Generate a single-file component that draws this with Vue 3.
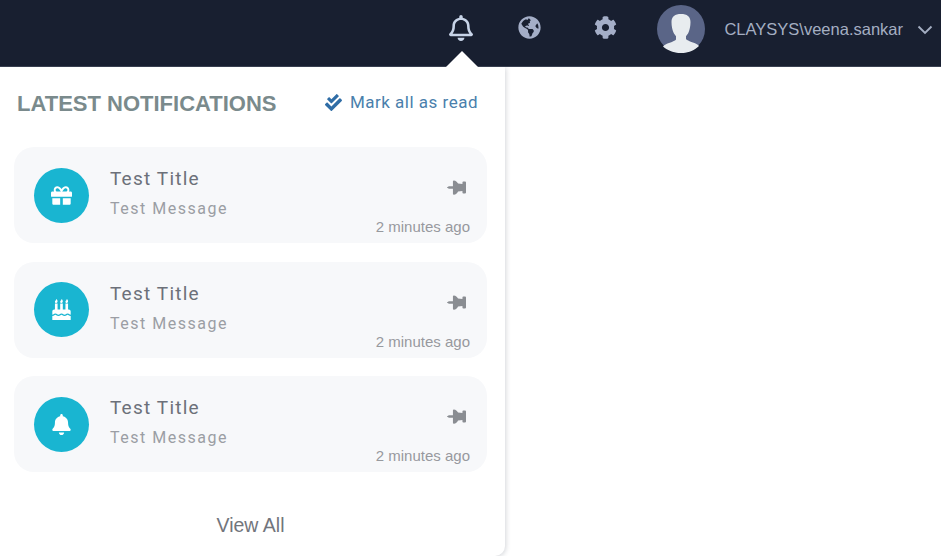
<script setup>
const items = [
  { id: 1, icon: 'gift' },
  { id: 2, icon: 'cake' },
  { id: 3, icon: 'bell' }
]
const pin = 'M298.028 214.267L285.793 96H328c13.255 0 24-10.745 24-24V24c0-13.255-10.745-24-24-24H56C42.745 0 32 10.745 32 24v48c0 13.255 10.745 24 24 24h42.207L85.972 214.267C37.465 236.82 0 277.261 0 328c0 13.255 10.745 24 24 24h136v104.007c0 1.242.289 2.467.845 3.578l24 48c2.941 5.882 11.364 5.893 14.31 0l24-48a8.008 8.008 0 0 0 .845-3.578V352h136c13.255 0 24-10.745 24-24-.001-51.183-37.983-91.42-85.972-113.733z'
</script>

<template>
  <div class="page">
    <header class="topbar">
      <div class="bell-wrap">
        <svg class="bell-top" viewBox="0 0 448 512" preserveAspectRatio="none"><path d="M439.39 362.29c-19.32-20.76-55.47-51.99-55.47-154.29 0-77.7-54.48-139.9-127.94-155.16V32c0-17.67-14.32-32-31.98-32s-31.98 14.33-31.98 32v20.84C118.56 68.1 64.08 130.3 64.08 208c0 102.3-36.15 133.53-55.47 154.29-6 6.45-8.66 14.16-8.61 21.71.11 16.4 12.98 32 32.1 32h383.8c19.12 0 32-15.6 32.1-32 .05-7.55-2.61-15.27-8.61-21.71zM67.53 368c21.22-27.97 44.42-74.33 44.53-159.42 0-.2-.06-.38-.06-.58 0-61.86 50.14-112 112-112s112 50.14 112 112c0 .2-.06.38-.06.58.11 85.1 23.31 131.46 44.53 159.42H67.53zM224 512c35.32 0 63.97-28.65 63.97-64H160.03c0 35.35 28.65 64 63.97 64z"/></svg>
        <span class="caret"></span>
      </div>
      <svg class="globe" viewBox="0 0 496 512"><path d="M248 8C111.03 8 0 119.03 0 256s111.03 248 248 248 248-111.03 248-248S384.97 8 248 8zm82.29 357.6c-3.9 3.88-7.99 7.95-11.31 11.28-2.99 3-5.1 6.7-6.17 10.71-1.51 5.66-2.73 11.38-4.77 16.87l-17.39 46.85c-13.76 3-28 4.69-42.65 4.69v-27.38c1.69-12.62-7.64-36.26-22.63-51.25-6-6-9.37-14.14-9.37-22.63v-32.01c0-11.64-6.27-22.34-16.46-27.97-14.37-7.95-34.81-19.06-48.81-26.11-11.48-5.78-22.1-13.14-31.65-21.75l-.8-.72a114.792 114.792 0 0 1-18.06-20.74c-9.38-13.77-24.66-36.42-34.59-51.14 20.47-45.5 57.36-82.04 103.2-101.89l24.01 12.01C203.48 89.74 216 82.01 216 70.11v-11.3c7.99-1.29 16.12-2.11 24.39-2.42l28.3 28.3c6.25 6.25 6.25 16.38 0 22.63L264 112l-10.34 10.34c-3.12 3.12-3.12 8.19 0 11.31l4.69 4.69c3.12 3.12 3.12 8.19 0 11.31l-8 8a8.008 8.008 0 0 1-5.66 2.34h-8.99c-2.08 0-4.08.81-5.58 2.27l-9.92 9.65a8.008 8.008 0 0 0-1.58 9.31l15.59 31.19c2.66 5.32-1.21 11.58-7.15 11.58h-5.64c-1.93 0-3.79-.7-5.24-1.96l-9.28-8.06a16.017 16.017 0 0 0-15.55-3.1l-31.17 10.39a11.95 11.95 0 0 0-8.17 11.34c0 4.53 2.56 8.66 6.61 10.69l11.08 5.54c9.41 4.71 19.79 7.16 30.31 7.16s22.59 27.29 32 32h66.75c8.49 0 16.62 3.37 22.63 9.37l13.69 13.69a30.503 30.503 0 0 1 8.93 21.57 46.536 46.536 0 0 1-13.72 32.98zM417 274.25c-5.79-1.45-10.84-5-14.15-9.97l-17.98-26.97a23.97 23.97 0 0 1 0-26.62l19.59-29.38c2.32-3.47 5.5-6.29 9.24-8.15l12.98-6.49C440.2 193.59 448 223.87 448 256c0 8.67-.74 17.16-1.82 25.54L417 274.25z"/></svg>
      <svg class="cog" viewBox="0 0 512 512"><path d="M487.4 315.7l-42.6-24.6c4.3-23.2 4.3-47 0-70.2l42.6-24.6c4.9-2.8 7.1-8.6 5.5-14-11.1-35.6-30-67.8-54.7-94.6-3.8-4.1-10-5.1-14.8-2.3L380.8 110c-17.9-15.4-38.5-27.3-60.8-35.1V25.8c0-5.6-3.9-10.5-9.4-11.7-36.7-8.2-74.3-7.8-109.2 0-5.5 1.2-9.4 6.1-9.4 11.7V75c-22.2 7.9-42.8 19.8-60.8 35.1L88.7 85.5c-4.9-2.8-11-1.9-14.8 2.3-24.7 26.7-43.6 58.9-54.7 94.6-1.7 5.4.6 11.2 5.5 14L67.3 221c-4.3 23.2-4.3 47 0 70.2l-42.6 24.6c-4.9 2.8-7.1 8.6-5.5 14 11.1 35.6 30 67.8 54.7 94.6 3.8 4.1 10 5.1 14.8 2.3l42.6-24.6c17.9 15.4 38.5 27.3 60.8 35.1v49.2c0 5.6 3.9 10.5 9.4 11.7 36.7 8.2 74.3 7.8 109.2 0 5.5-1.2 9.4-6.1 9.4-11.7v-49.2c22.2-7.9 42.8-19.8 60.8-35.1l42.6 24.6c4.9 2.8 11 1.9 14.8-2.3 24.7-26.7 43.6-58.9 54.7-94.6 1.5-5.5-.7-11.3-5.6-14.1zM256 336c-44.1 0-80-35.9-80-80s35.9-80 80-80 80 35.9 80 80-35.9 80-80 80z"/></svg>
      <svg class="avatar" viewBox="0 0 48 48">
        <circle cx="24" cy="24" r="24" fill="#5a6587"/>
        <path fill="#e8ecef" d="M24 9c-6 0-9.500 2.500-9.500 8 0 4 .8 8 2 10.500.8 1.700 1.700 2.800 2.500 3.500v3.500c-1.500 1.800-6 3-10 4.700-1.300.6-2.300 1.300-3 2.300C10.600 45.400 17 48 24 48s13.400-2.600 18-7c-.7-1-1.700-1.700-3-2.300-4-1.700-8.500-2.900-10-4.700V31c.8-.7 1.700-1.800 2.500-3.500 1.200-2.500 2-6.500 2-10.500 0-5.500-3.500-8-9.500-8z"/>
      </svg>
      <span class="username">CLAYSYS\veena.sankar</span>
      <svg class="chevron" viewBox="0 0 16 10"><path d="M1.500 1.500 8 8l6.500-6.500" fill="none" stroke="#a4aec2" stroke-width="1.900"/></svg>
    </header>

    <section class="panel">
      <div class="panel-head">
        <h2>LATEST NOTIFICATIONS</h2>
        <a class="mark">
          <svg viewBox="0 0 512 512"><path d="M505 174.8l-39.6-39.6c-9.4-9.4-24.6-9.4-33.9 0L192 374.7 80.6 263.2c-9.4-9.4-24.6-9.4-33.9 0L7 302.9c-9.4 9.4-9.4 24.6 0 34L175 505c9.4 9.4 24.6 9.4 33.9 0l296-296.2c9.4-9.5 9.4-24.7.1-34zm-324.3 106c6.2 6.3 16.4 6.3 22.6 0l208-208.2c6.2-6.3 6.2-16.4 0-22.6L366.1 4.7c-6.2-6.3-16.4-6.3-22.6 0L192 156.2l-55.4-55.5c-6.2-6.3-16.4-6.3-22.6 0L68.7 146c-6.2 6.3-6.2 16.4 0 22.6l112 112.8z"/></svg>
          Mark all as read
        </a>
      </div>

      <div class="list">
        <article v-for="item in items" :key="item.id" class="card">
          <div class="circle">
            <svg v-if="item.icon === 'gift'" class="ic" viewBox="0 0 512 512"><path d="M32 448c0 17.700 14.300 32 32 32h160V320H32v128zm256 32h160c17.700 0 32-14.300 32-32V320H288v160zm192-320h-42.100c6.200-12.100 10.100-25.500 10.100-40 0-48.500-39.500-88-88-88-41.600 0-68.500 21.300-103 68.300-34.500-47-61.400-68.300-103-68.300-48.500 0-88 39.500-88 88 0 14.500 3.800 27.900 10.100 40H32c-17.700 0-32 14.300-32 32v80c0 8.800 7.200 16 16 16h480c8.800 0 16-7.200 16-16v-80c0-17.700-14.300-32-32-32zm-326.100 0c-22.100 0-40-17.900-40-40s17.900-40 40-40c19.900 0 34.600 3.300 86.100 80h-86.100zm206.100 0h-86.100c51.400-76.500 65.700-80 86.100-80 22.100 0 40 17.900 40 40s-17.900 40-40 40z"/></svg>
            <svg v-else-if="item.icon === 'cake'" class="ic" viewBox="0 0 448 512"><path d="M448 384c-28.020 0-31.260-32-74.500-32-43.430 0-46.825 32-74.750 32-27.695 0-31.454-32-74.750-32-42.842 0-47.218 32-74.500 32-28.148 0-31.202-32-74.750-32-43.547 0-46.653 32-74.750 32v-80c0-26.500 21.500-48 48-48h16V112h64v144h64V112h64v144h64V112h64v144h16c26.500 0 48 21.500 48 48v80zm0 128H0v-96c43.356 0 46.767-32 74.750-32 27.951 0 31.253 32 74.750 32 42.843 0 47.217-32 74.500-32 28.148 0 31.201 32 74.750 32 43.357 0 46.767-32 74.750-32 27.488 0 31.252 32 74.500 32v96zM96 96c-17.750 0-32-14.250-32-32 0-31 32-23 32-64 12 0 32 29.500 32 56s-14.250 40-32 40zm128 0c-17.750 0-32-14.250-32-32 0-31 32-23 32-64 12 0 32 29.500 32 56s-14.250 40-32 40zm128 0c-17.750 0-32-14.250-32-32 0-31 32-23 32-64 12 0 32 29.500 32 56s-14.250 40-32 40z"/></svg>
            <svg v-else class="ic" viewBox="0 0 448 512"><path d="M224 512c35.320 0 63.970-28.650 63.970-64H160.030c0 35.350 28.650 64 63.970 64zm215.390-149.710c-19.320-20.760-55.470-51.990-55.470-154.290 0-77.700-54.480-139.900-127.940-155.160V32c0-17.670-14.320-32-31.980-32s-31.980 14.330-31.980 32v20.840C118.560 68.100 64.080 130.300 64.080 208c0 102.300-36.150 133.530-55.470 154.290-6 6.450-8.660 14.160-8.610 21.710.11 16.400 12.980 32 32.100 32h383.800c19.120 0 32-15.600 32.100-32 .05-7.550-2.610-15.270-8.610-21.710z"/></svg>
          </div>
          <div class="body">
            <div class="title">Test Title</div>
            <div class="message">Test Message</div>
          </div>
          <div class="meta">
            <svg class="pin" viewBox="0 0 384 512"><path :d="pin"/></svg>
            <span class="time">2 minutes ago</span>
          </div>
        </article>
      </div>

      <div class="view-all">View All</div>
    </section>
  </div>
</template>

<style>
html, body { margin: 0; background: #fff; overflow: hidden; }
</style>

<style scoped>
.page {
  width: 941px;
  height: 556px;
  font-family: Roboto, "Liberation Sans", sans-serif;
  background: #fff;
  overflow: hidden;
}
.topbar {
  height: 67px;
  box-sizing: border-box;
  background: #181f30;
  display: flex;
  align-items: flex-start;
  padding: 0 8px 0 0;
  border-bottom: 1px solid #3a4152;
}
.bell-wrap {
  position: relative;
  margin-left: auto;
  margin-top: 15px;
  display: flex;
}
.bell-top { width: 24px; height: 26px; fill: #c8d4e8; }
.caret {
  position: absolute;
  left: -3px;
  top: 36px;
  width: 0;
  height: 0;
  border-left: 16px solid transparent;
  border-right: 16px solid transparent;
  border-bottom: 16px solid #fff;
}
.globe { width: 23px; height: 23px; fill: #a4aec7; margin: 16px 0 0 45px; }
.cog { width: 23px; height: 23px; fill: #a4aec7; margin: 16px 0 0 53px; }
.avatar { width: 48px; height: 48px; margin: 5px 0 0 40px; flex: none; }
.username {
  font-family: "Liberation Sans", Arial, sans-serif;
  font-size: 16.5px;
  line-height: 20px;
  color: #a4aec2;
  margin: 19px 0 0 19px;
}
.chevron { width: 16px; height: 10px; margin: 25px 0 0 14px; }

.panel {
  width: 505px;
  height: 489px;
  box-sizing: border-box;
  background: #fff;
  border-bottom-right-radius: 10px;
  box-shadow: 1px 1px 5px rgba(40, 50, 70, 0.2);
  padding: 0 18px 0 14px;
  display: flex;
  flex-direction: column;
}
.panel-head {
  height: 80px;
  display: flex;
  align-items: flex-start;
  justify-content: space-between;
  padding: 23px 9px 0 3px;
  box-sizing: border-box;
}
h2 {
  margin: 0;
  font-family: "Liberation Sans", Arial, sans-serif;
  font-size: 22px;
  line-height: 28px;
  font-weight: 700;
  color: #7a8a8c;
}
.mark {
  display: flex;
  align-items: center;
  gap: 8px;
  font-size: 17px;
  line-height: 26px;
  color: #4a7fac;
  letter-spacing: 0.5px;
  margin-top: -1px;
}
.mark svg { width: 17px; height: 17px; fill: #2f6da6; }
.list { display: flex; flex-direction: column; gap: 18.5px; }
.card {
  height: 96px;
  box-sizing: border-box;
  background: #f7f8fa;
  border-radius: 20px;
  display: flex;
  align-items: center;
  padding: 0 17px 0 20px;
}
.circle {
  width: 55px;
  height: 55px;
  border-radius: 50%;
  background: #19b5d1;
  display: flex;
  align-items: center;
  justify-content: center;
  flex: none;
}
.ic { width: 21px; height: 21px; fill: #fff; }
.body { margin-left: 21px; flex: 1; align-self: flex-start; padding-top: 19px; }
.title {
  font-size: 19px;
  line-height: 26px;
  color: #6c7079;
  letter-spacing: 1.2px;
}
.message {
  font-size: 16px;
  line-height: 22px;
  margin-top: 6px;
  color: #9b9ea4;
  letter-spacing: 1.5px;
}
.meta {
  align-self: stretch;
  display: flex;
  flex-direction: column;
  align-items: flex-end;
  justify-content: space-between;
  padding: 31px 0 7px;
  box-sizing: border-box;
}
.pin {
  width: 19px;
  height: 19px;
  fill: #8a8d92;
  transform: rotate(90deg);
  margin-right: 4px;
}
.time {
  font-family: "Liberation Sans", Arial, sans-serif;
  font-size: 15px;
  line-height: 18px;
  color: #97999e;
}
.view-all {
  font-family: "Liberation Sans", Arial, sans-serif;
  margin-top: 40px;
  text-align: center;
  font-size: 19.500px;
  line-height: 26px;
  color: #72757c;
}
</style>
